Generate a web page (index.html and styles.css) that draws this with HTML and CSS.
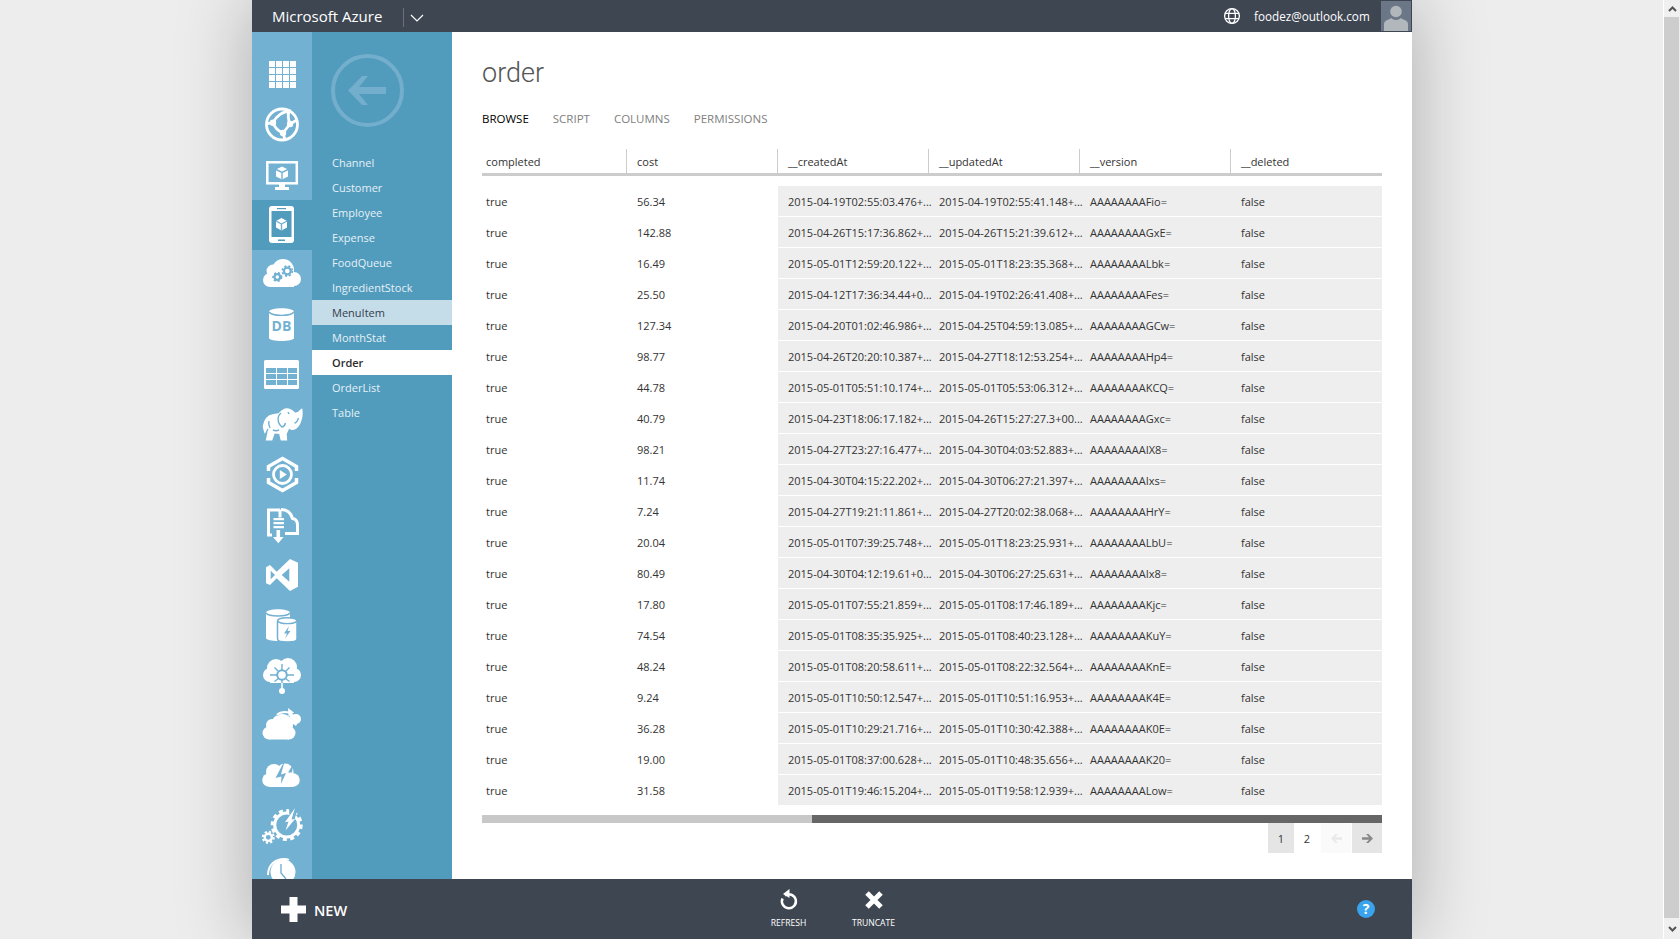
FILE: index.html

```html
<!DOCTYPE html>
<html lang="en">
<head>
    <meta charset="UTF-8">
    <title>order - Microsoft Azure</title>
    <link rel="stylesheet" href="styles.css">
</head>
<body>
<div class="stage">
<div class="shell">
    <div class="topbar">
        <span class="brand">Microsoft Azure</span>
        <span class="brand-sep"></span>
        <svg class="brand-chevron" width="14" height="8" viewBox="0 0 14 8"><path d="M1 1l6 6 6-6" fill="none" stroke="#fff" stroke-width="1.2"/></svg>
        <svg class="globe" width="18" height="18" viewBox="0 0 18 18"><g fill="none" stroke="#fff" stroke-width="1.3"><circle cx="9" cy="9" r="7.4"/><ellipse cx="9" cy="9" rx="3.4" ry="7.4"/><path d="M2 6.3h14M2 11.7h14"/></g></svg>
        <span class="email">foodez@outlook.com</span>
        <span class="avatar"><svg width="30" height="30" viewBox="0 0 30 30"><circle cx="15" cy="10.5" r="5.8" fill="#b2b7bc"/><path d="M3 30v-7c0-4 5-4 7-6 3 2.500 7 2.500 10 0 2 2 7 2 7 6v7z" fill="#b2b7bc"/></svg></span>
    </div>

    <div class="middle">
        <div class="leftnav">
            <div class="nav-item"><svg class="ico" viewBox="0 0 60 50"><path class="w" d="M17 11h6v6h-6zM24 11h6v6h-6zM31 11h6v6h-6zM38 11h6v6h-6zM17 18h6v6h-6zM24 18h6v6h-6zM31 18h6v6h-6zM38 18h6v6h-6zM17 25h6v6h-6zM24 25h6v6h-6zM31 25h6v6h-6zM38 25h6v6h-6zM17 32h6v6h-6zM24 32h6v6h-6zM31 32h6v6h-6zM38 32h6v6h-6z"/></svg></div>
            <div class="nav-item"><svg class="ico" viewBox="0 0 60 50"><g class="ln" stroke-width="2.800"><circle cx="30" cy="24.500" r="15.500"/><path d="M21 22.700C24 16 31 11 39 11M21 22.700C23 28 26 31 31 33M38 24l7-4M38 24c-2-5-2-10-1-13M38 24l-7 9M31 33l2 7M21 22.700l-6 1"/></g><circle class="w" cx="21" cy="22.700" r="3.200"/><circle class="w" cx="38" cy="24" r="3.200"/><circle class="w" cx="31" cy="33" r="3.200"/></svg></div>
            <div class="nav-item"><svg class="ico" viewBox="0 0 60 50"><rect x="15.300" y="12.300" width="29.500" height="21" fill="none" stroke="#fff" stroke-width="2.500"/><path class="w" d="M27 34h6v3h4v3H23v-3h4z"/><path class="w" d="M30 16.500l6 3v7l-6 3-6-3v-7z"/><path class="cut-line" d="M24 19.500l6 3 6-3M30 22.500v7"/></svg></div>
            <div class="nav-item active"><svg class="ico" viewBox="0 0 60 50"><rect class="w" x="17" y="6" width="25" height="37" rx="3"/><rect class="cut" x="19.500" y="11" width="20" height="26"/><rect class="cut" x="25" y="8" width="9" height="1.200"/><rect class="cut" x="26" y="39.500" width="7" height="1.500"/><path class="w" d="M29.500 18l5.500 3v6.500l-5.500 3-5.500-3V21z"/><path class="cut-line" d="M24 21l5.500 3 5.500-3M29.500 24v6.500"/></svg></div>
            <div class="nav-item"><svg class="ico" viewBox="0 0 60 50"><g class="w"><circle cx="18" cy="30" r="7"/><circle cx="21" cy="21" r="6.500"/><circle cx="31" cy="20" r="11"/><circle cx="42" cy="29" r="7"/><rect x="18" y="26" width="24" height="11"/></g><g class="gear"><circle cx="35.300" cy="21" r="3.400"/><circle cx="35.300" cy="21" r="5" class="teeth"/><circle cx="25.300" cy="27" r="2.800"/><circle cx="25.300" cy="27" r="4.200" class="teeth"/></g></svg></div>
            <div class="nav-item"><svg class="ico" viewBox="0 0 60 50"><path class="w" d="M17 12c0-5 25-5 25 0v26c0 4-25 4-25 0z"/><path class="cut-line" d="M17 12c3 4.500 22 4.500 25 0"/><text class="db" x="29.500" y="31" text-anchor="middle">DB</text></svg></div>
            <div class="nav-item"><svg class="ico" viewBox="0 0 60 50"><rect class="w" x="12" y="10" width="35" height="29" rx="1.500"/><path class="cut" d="M14 18h10v5H14zM25 18h10v5H25zM36 18h9v5h-9zM14 24h10v5H14zM25 24h10v5H25zM36 24h9v5h-9zM14 30h10v5H14zM25 30h10v5H25zM36 30h9v5h-9z"/></svg></div>
            <div class="nav-item"><svg class="ico" viewBox="0 0 60 50"><path class="w" d="M10.700 27c1-6 3-10 7.300-12 4-1.500 6-1 8.500-1.700 3-3.300 6-5.500 9.500-5 3 .4 5.500 3 7 4.200 1.500.3 3.500-.5 4.500-2.200 1.500-1 2.200-2 2.700-2 .8 4 .8 9-1 13-1.500 4.500-4 8-8 8.700-1.500 0-3.400-.5-4-1.500l-2.500 5.500.500 6.500-6.500 0-1.500-6.500-4.500-.5-2.500 7-6.500 0 1.800-8.500-3 1.500z"/><path class="cut-line" d="M29 13c-4 3-4 10 1 14 2-.5 3-2 3.500-4M42.500 23c2 0 3-2 4-5M17 21c-1 3 0 5 1 7M21 30c2 1 4 1 6 0M14 33l2-4M36 12l1 2"/></svg></div>
            <div class="nav-item"><svg class="ico" viewBox="0 0 60 50"><path d="M16.500 21v-4.500l14-8 14 8V21M16.500 28v4.500l14 8 14-8V28" fill="none" stroke="#fff" stroke-width="3.500"/><circle cx="30.500" cy="24.500" r="9" fill="none" stroke="#fff" stroke-width="2.800"/><path class="w" d="M27.800 20l7 4.500-7 4.500z"/></svg></div>
            <div class="nav-item"><svg class="ico" viewBox="0 0 60 50"><path d="M20 35h-3.500V10H28" fill="none" stroke="#fff" stroke-width="3"/><path d="M28 9.500v8M29 9.500c6 0 10 3.500 11.500 9 3.500.5 5 3 5 6.500v8.500H33" fill="none" stroke="#fff" stroke-width="3"/><path class="w" d="M21.500 18H32v2.200H21.500zM21.500 22H32v2.200H21.500zM21.500 26H32v2.200H21.500zM24.500 30h3.600v7h3.500l-5.300 6.300-5.300-6.300h3.500z"/></svg></div>
            <div class="nav-item"><svg class="ico" viewBox="0 0 60 50"><path class="w" fill-rule="evenodd" d="M38 9l8 3.700v24L38 41 24.700 28.300 18 35l-4-1.700v-16l4-2.300 6.700 6.700zM37.300 18.300v13.400L29.700 25zM18.700 20.700v8.600L23 25z"/></svg></div>
            <div class="nav-item"><svg class="ico" viewBox="0 0 60 50"><path class="w" d="M14 13c0-5 24-5 24 0v25c0 4-24 4-24 0z"/><path class="cut-line" d="M14 13c3 4 21 4 24 0"/><path class="w cut-stroke" d="M25.500 21c0-4.500 19.500-4.500 19.500 0v18c0 4-19.500 4-19.500 0z"/><path class="cut-line" d="M25.500 21c3 3.500 16.500 3.500 19.500 0"/><path class="cut" d="M37 26l-5 7.500h3l-2 5 5.500-7.500h-3z"/></svg></div>
            <div class="nav-item"><svg class="ico" viewBox="0 0 60 50"><g class="w"><circle cx="18" cy="25" r="7"/><circle cx="24" cy="18" r="9"/><circle cx="36" cy="17" r="9"/><circle cx="42" cy="25" r="7"/><rect x="18" y="22" width="24" height="11"/><circle cx="30" cy="41" r="3"/><rect x="29.200" y="32" width="1.600" height="8"/></g><circle cx="30" cy="25" r="4.800" fill="none" class="cut-stroke2"/><g class="cut-line"><path d="M30 20v-6M30 30v3M25 25h-7M35 25h7M26.500 21.500l-4-4M33.500 21.500l4-4M26.500 28.500l-4 3M33.500 28.500l4 3"/></g></svg></div>
            <div class="nav-item"><svg class="ico" viewBox="0 0 60 50"><circle class="w" cx="44" cy="19" r="5"/><path class="w" d="M38 14c2-1 4 0 5 3l4 3-3 6-7-5z"/><g class="w"><circle cx="17" cy="33" r="6.500"/><circle cx="20" cy="25" r="6"/><circle cx="30" cy="25" r="11"/><circle cx="37" cy="33" r="6.500"/><rect x="17" y="30" width="20" height="9.500" /></g><path d="M24 15c3-4 8-4.500 13-3" fill="none" class="cut-stroke3"/><path d="M25 15c3-3 7-3.500 12-2.500" fill="none" stroke="#fff" stroke-width="2"/><path class="w" d="M36 8l6 4.500-5.500 4z"/></svg></div>
            <div class="nav-item"><svg class="ico" viewBox="0 0 60 50"><g class="w"><circle cx="17" cy="30" r="6.800"/><circle cx="22" cy="22" r="8"/><circle cx="33" cy="22" r="8.500"/><circle cx="41" cy="30" r="6.800"/><rect x="17" y="27" width="24" height="10"/></g><path class="cut" d="M33 10l-9.500 18 6-1.500-.5 7.500 5-11-5 1.500z M41.500 13.500l-5.500 9 4 0z"/></svg></div>
            <div class="nav-item"><svg class="ico" viewBox="0 0 60 50"><circle cx="34.700" cy="25" r="12" fill="none" stroke="#fff" stroke-width="3"/><circle cx="34.700" cy="25" r="14.500" fill="none" stroke="#fff" stroke-width="3" stroke-dasharray="4 3.500"/><path class="cut" d="M37 6h10L38 32z"/><path class="w" d="M43 8l-3.500 11.500 3.500-.5-9.500 11.500 3-9-3.500.7z"/><circle cx="16.300" cy="37.300" r="3.600" fill="none" stroke="#fff" stroke-width="2.400"/><circle cx="16.300" cy="37.300" r="5.500" fill="none" stroke="#fff" stroke-width="2" stroke-dasharray="2.300 2"/></svg></div>
            <div class="nav-item"><svg class="ico" viewBox="0 0 60 50"><path d="M16 25c0-10 7-16 16-16 2 0 4 .3 5 .8" fill="none" stroke="#fff" stroke-width="2"/><circle class="w" cx="31" cy="22" r="12.500"/><path class="cut-line" d="M29 14v9l5 6"/></svg></div>
        </div>

        <div class="subnav">
            <svg class="back" width="73" height="73" viewBox="0 0 73 73"><circle cx="36.500" cy="36.500" r="34.500" fill="none" stroke="#74aecd" stroke-width="4"/><path d="M17 36.500L31 22h6l-9 11h27v7H28l9 11h-6z" fill="#74aecd"/></svg>
            <ul class="tables">
                <li>Channel</li>
                <li>Customer</li>
                <li>Employee</li>
                <li>Expense</li>
                <li>FoodQueue</li>
                <li>IngredientStock</li>
                <li class="hover">MenuItem</li>
                <li>MonthStat</li>
                <li class="current">Order</li>
                <li>OrderList</li>
                <li>Table</li>
            </ul>
        </div>

        <div class="content">
            <h1 class="title">order</h1>
            <div class="tabs">
                <span class="tab on">Browse</span>
                <span class="tab">Script</span>
                <span class="tab">Columns</span>
                <span class="tab">Permissions</span>
            </div>
            <table class="grid">
                <thead>
                    <tr><th>completed</th><th>cost</th><th>__createdAt</th><th>__updatedAt</th><th>__version</th><th>__deleted</th></tr>
                </thead>
                <tbody>
                    <tr><td>true</td><td>56.34</td><td>2015-04-19T02:55:03.476+...</td><td>2015-04-19T02:55:41.148+...</td><td>AAAAAAAAFio=</td><td>false</td></tr>
                    <tr><td>true</td><td>142.88</td><td>2015-04-26T15:17:36.862+...</td><td>2015-04-26T15:21:39.612+...</td><td>AAAAAAAAGxE=</td><td>false</td></tr>
                    <tr><td>true</td><td>16.49</td><td>2015-05-01T12:59:20.122+...</td><td>2015-05-01T18:23:35.368+...</td><td>AAAAAAAALbk=</td><td>false</td></tr>
                    <tr><td>true</td><td>25.50</td><td>2015-04-12T17:36:34.44+0...</td><td>2015-04-19T02:26:41.408+...</td><td>AAAAAAAAFes=</td><td>false</td></tr>
                    <tr><td>true</td><td>127.34</td><td>2015-04-20T01:02:46.986+...</td><td>2015-04-25T04:59:13.085+...</td><td>AAAAAAAAGCw=</td><td>false</td></tr>
                    <tr><td>true</td><td>98.77</td><td>2015-04-26T20:20:10.387+...</td><td>2015-04-27T18:12:53.254+...</td><td>AAAAAAAAHp4=</td><td>false</td></tr>
                    <tr><td>true</td><td>44.78</td><td>2015-05-01T05:51:10.174+...</td><td>2015-05-01T05:53:06.312+...</td><td>AAAAAAAAKCQ=</td><td>false</td></tr>
                    <tr><td>true</td><td>40.79</td><td>2015-04-23T18:06:17.182+...</td><td>2015-04-26T15:27:27.3+00...</td><td>AAAAAAAAGxc=</td><td>false</td></tr>
                    <tr><td>true</td><td>98.21</td><td>2015-04-27T23:27:16.477+...</td><td>2015-04-30T04:03:52.883+...</td><td>AAAAAAAAIX8=</td><td>false</td></tr>
                    <tr><td>true</td><td>11.74</td><td>2015-04-30T04:15:22.202+...</td><td>2015-04-30T06:27:21.397+...</td><td>AAAAAAAAIxs=</td><td>false</td></tr>
                    <tr><td>true</td><td>7.24</td><td>2015-04-27T19:21:11.861+...</td><td>2015-04-27T20:02:38.068+...</td><td>AAAAAAAAHrY=</td><td>false</td></tr>
                    <tr><td>true</td><td>20.04</td><td>2015-05-01T07:39:25.748+...</td><td>2015-05-01T18:23:25.931+...</td><td>AAAAAAAALbU=</td><td>false</td></tr>
                    <tr><td>true</td><td>80.49</td><td>2015-04-30T04:12:19.61+0...</td><td>2015-04-30T06:27:25.631+...</td><td>AAAAAAAAIx8=</td><td>false</td></tr>
                    <tr><td>true</td><td>17.80</td><td>2015-05-01T07:55:21.859+...</td><td>2015-05-01T08:17:46.189+...</td><td>AAAAAAAAKjc=</td><td>false</td></tr>
                    <tr><td>true</td><td>74.54</td><td>2015-05-01T08:35:35.925+...</td><td>2015-05-01T08:40:23.128+...</td><td>AAAAAAAAKuY=</td><td>false</td></tr>
                    <tr><td>true</td><td>48.24</td><td>2015-05-01T08:20:58.611+...</td><td>2015-05-01T08:22:32.564+...</td><td>AAAAAAAAKnE=</td><td>false</td></tr>
                    <tr><td>true</td><td>9.24</td><td>2015-05-01T10:50:12.547+...</td><td>2015-05-01T10:51:16.953+...</td><td>AAAAAAAAK4E=</td><td>false</td></tr>
                    <tr><td>true</td><td>36.28</td><td>2015-05-01T10:29:21.716+...</td><td>2015-05-01T10:30:42.388+...</td><td>AAAAAAAAK0E=</td><td>false</td></tr>
                    <tr><td>true</td><td>19.00</td><td>2015-05-01T08:37:00.628+...</td><td>2015-05-01T10:48:35.656+...</td><td>AAAAAAAAK20=</td><td>false</td></tr>
                    <tr><td>true</td><td>31.58</td><td>2015-05-01T19:46:15.204+...</td><td>2015-05-01T19:58:12.939+...</td><td>AAAAAAAALow=</td><td>false</td></tr>
                </tbody>
            </table>
            <div class="hscroll"><span class="hscroll-left"></span><span class="hscroll-thumb"></span></div>
            <div class="pager">
                <span class="page on">1</span>
                <span class="page">2</span>
                <span class="page-arrow off"><svg width="11" height="9" viewBox="0 0 11 9"><path d="M0 4.500L4.500 0h2.500L4 3.200h7v2.600H4L7 9H4.500z" fill="#e9e9e9"/></svg></span>
                <span class="page-arrow"><svg width="11" height="9" viewBox="0 0 11 9"><path d="M11 4.500L6.500 0H4l3 3.200H0v2.600h7L4 9h2.500z" fill="#888"/></svg></span>
            </div>
        </div>
    </div>

    <div class="footer">
        <div class="new-btn">
            <svg width="25" height="25" viewBox="0 0 25 25"><path d="M8.500 0h8v8.500H25v8h-8.500V25h-8v-8.500H0v-8h8.500z" fill="#fff"/></svg>
            <span>NEW</span>
        </div>
        <div class="action">
            <svg width="20" height="22" viewBox="0 0 20 22"><path d="M6 6.500a7 7 0 1 1-2.500 3" fill="none" stroke="#fff" stroke-width="2.500"/><path d="M10.500 0v9L4 5z" fill="#fff"/></svg>
            <span>Refresh</span>
        </div>
        <div class="action">
            <svg width="20" height="22" viewBox="0 0 20 22"><path d="M3 4l14 14M17 4L3 18" stroke="#fff" stroke-width="5"/></svg>
            <span>Truncate</span>
        </div>
        <div class="help">?</div>
    </div>
</div>
</div>

<div class="vscroll">
    <div class="vs-btn up"><svg width="9" height="6" viewBox="0 0 9 6"><path d="M1 5l3.500-3.500L8 5" fill="none" stroke="#555" stroke-width="2"/></svg></div>
    <div class="vs-thumb"></div>
    <div class="vs-btn down"><svg width="9" height="6" viewBox="0 0 9 6"><path d="M1 1l3.500 3.500L8 1" fill="none" stroke="#555" stroke-width="2"/></svg></div>
</div>
</body>
</html>
```

FILE: styles.css

```css
/* page */
html, body {
    margin: 0;
    padding: 0;
    height: 939px;
    overflow: hidden;
}

body {
    display: flex;
    background-color: #ededed;
    color: #333;
    font-family: "Open Sans", "Noto Sans", Arial, sans-serif;
    font-size: 11px;
}

.stage {
    flex: 1;
    overflow: hidden;
}

.shell {
    display: flex;
    flex-direction: column;
    width: 1160px;
    height: 939px;
    margin-left: 252px;
    box-shadow: 0 0 70px rgba(0, 0, 0, 0.28);
}

/* top bar */
.topbar {
    display: flex;
    align-items: center;
    height: 32px;
    flex-shrink: 0;
    background-color: #3e4652;
    color: #fff;
}

.brand {
    margin-left: 20px;
    font-size: 15px;
    width: 131px;
    white-space: nowrap;
}

.brand-sep {
    width: 1px;
    height: 19px;
    margin-top: 2px;
    background-color: #6a717c;
}

.brand-chevron {
    margin-left: 6px;
    margin-top: 3px;
}

.globe {
    margin-left: auto;
}

.email {
    margin-left: 13px;
    width: 127px;
    font-size: 11.7px;
    white-space: nowrap;
}

.avatar {
    display: block;
    width: 30px;
    height: 30px;
    margin-right: 1px;
    background-color: #6b7787;
}

.avatar svg {
    display: block;
}

/* middle area */
.middle {
    display: flex;
    flex: 1;
    min-height: 0;
}

.leftnav {
    width: 60px;
    flex-shrink: 0;
    padding-top: 18px;
    background-color: #72b1d2;
    overflow: hidden;
}

.nav-item {
    height: 50px;
}

.nav-item.active {
    background-color: #519bbd;
}

.ico {
    display: block;
    width: 60px;
    height: 50px;
}

.ico .w {
    fill: #fff;
}

.ico .ln {
    fill: none;
    stroke: #fff;
}

.ico .cut {
    fill: #72b1d2;
}

.active .ico .cut {
    fill: #519bbd;
}

.ico .cut-line {
    fill: none;
    stroke: #72b1d2;
    stroke-width: 1.4;
}

.ico .cut-stroke {
    stroke: #72b1d2;
    stroke-width: 1.5;
}

.ico .cut-stroke2 {
    stroke: #72b1d2;
    stroke-width: 2;
}

.ico .cut-stroke3 {
    stroke: #72b1d2;
    stroke-width: 4;
}

.ico .gear circle {
    fill: none;
    stroke: #72b1d2;
    stroke-width: 2.2;
}

.ico .gear .teeth {
    stroke-width: 1.8;
    stroke-dasharray: 2 2;
}

.ico .db {
    fill: #72b1d2;
    font-size: 14px;
    font-weight: 700;
}

/* table list */
.subnav {
    width: 140px;
    flex-shrink: 0;
    padding-top: 22px;
    background-color: #519bbd;
}

.back {
    display: block;
    margin-left: 19px;
}

.tables {
    list-style: none;
    margin: 23px 0 0;
    padding: 0;
}

.tables li {
    height: 25px;
    padding-left: 20px;
    line-height: 25px;
    color: #e6f1f6;
}

.tables .hover {
    background-color: #c5dce9;
    color: #33404c;
}

.tables .current {
    background-color: #fff;
    color: #2b2b2b;
    font-weight: 600;
}

/* content */
.content {
    flex: 1;
    padding: 21px 30px 0;
    background-color: #fff;
    min-width: 0;
}

.title {
    margin: 0;
    height: 40px;
    line-height: 40px;
    font-family: Roboto, "Open Sans", sans-serif;
    font-size: 27px;
    font-weight: 300;
    color: #555;
}

.tabs {
    display: flex;
    gap: 24px;
    height: 20px;
    margin-top: 16px;
    line-height: 20px;
}

.tab {
    font-size: 11.5px;
    text-transform: uppercase;
    color: #808080;
}

.tab.on {
    color: #000;
}

.grid {
    width: 900px;
    margin-top: 20px;
    table-layout: fixed;
    border-collapse: separate;
    border-spacing: 0;
}

.grid thead::after {
    content: "";
    display: block;
    height: 10px;
}

.grid th {
    width: 151px;
    height: 27px;
    padding: 0 0 0 10px;
    box-sizing: border-box;
    font-weight: 400;
    text-align: left;
    color: #333;
    border-right: 1px solid #ccc;
    border-bottom: 3px solid #ccc;
}

.grid th:first-child {
    width: 145px;
    padding-left: 4px;
}

.grid th:last-child {
    border-right: none;
}

.grid td {
    height: 31px;
    box-sizing: border-box;
    padding: 0 0 0 10px;
    white-space: nowrap;
    border-bottom: 1px solid #fff;
}

.grid td:first-child {
    padding-left: 4px;
}

.grid td:nth-child(n+3) {
    background-color: #eee;
}

.hscroll {
    display: flex;
    height: 8px;
    margin-top: 9px;
}

.hscroll-left {
    width: 330px;
    background-color: #c8c8c8;
}

.hscroll-thumb {
    flex: 1;
    background-color: #666;
}

/* pager */
.pager {
    display: flex;
    justify-content: flex-end;
    height: 30px;
}

.page {
    width: 26px;
    text-align: center;
    line-height: 31px;
}

.page.on {
    background-color: #e5e5e5;
}

.page-arrow {
    display: flex;
    align-items: center;
    justify-content: center;
    width: 30px;
    margin-left: 1px;
    background-color: #e5e5e5;
}

.page-arrow.off {
    background-color: #fafafa;
}

/* footer */
.footer {
    display: flex;
    align-items: flex-start;
    height: 60px;
    flex-shrink: 0;
    background-color: #3e4652;
    color: #fff;
}

.new-btn {
    display: flex;
    align-items: center;
    gap: 8px;
    width: 465px;
    margin: 18px 0 0 29px;
    font-size: 14.5px;
    font-weight: 600;
}

.new-btn span {
    padding-top: 1px;
}

.action {
    display: flex;
    flex-direction: column;
    align-items: center;
    width: 85px;
    margin-top: 10px;
}

.action svg {
    display: block;
}

.action span {
    margin-top: 6px;
    font-size: 8.6px;
    text-transform: uppercase;
    white-space: nowrap;
}

.help {
    width: 18px;
    height: 18px;
    margin: 21px 37px 0 auto;
    border-radius: 50%;
    background-color: #3aa3ee;
    font-size: 14px;
    font-weight: 700;
    line-height: 18px;
    text-align: center;
}

/* window scrollbar */
.vscroll {
    display: flex;
    flex-direction: column;
    width: 16px;
    flex-shrink: 0;
    border-left: 1px solid #fff;
    background-color: #f0f0f0;
}

.vs-btn {
    display: flex;
    align-items: center;
    justify-content: center;
    height: 17px;
}

.vs-btn.down {
    height: 21px;
}

.vs-thumb {
    flex: 1;
    margin-right: 1px;
    background-color: #cdcdcd;
}
```
